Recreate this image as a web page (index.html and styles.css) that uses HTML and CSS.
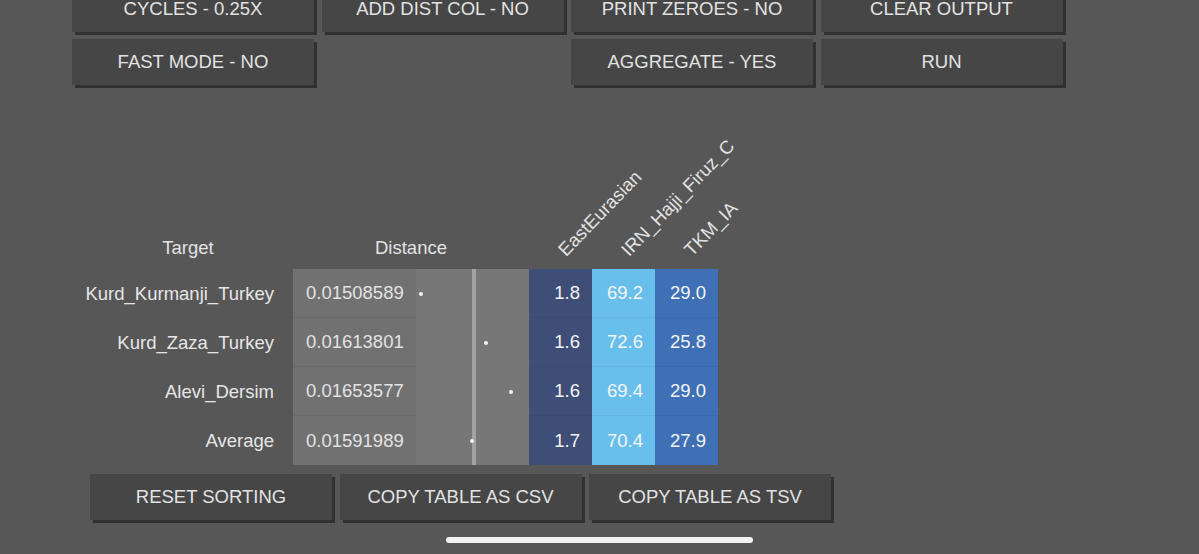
FILE: index.html
```html
<!DOCTYPE html>
<html>
<head>
<meta charset="utf-8">
<link rel="stylesheet" href="styles.css">
</head>
<body>
<div class="page">
  <div class="controls">
    <div class="btn">CYCLES - 0.25X</div>
    <div class="btn">ADD DIST COL - NO</div>
    <div class="btn">PRINT ZEROES - NO</div>
    <div class="btn">CLEAR OUTPUT</div>
    <div class="btn c1">FAST MODE - NO</div>
    <div class="btn c3">AGGREGATE - YES</div>
    <div class="btn c4">RUN</div>
  </div>

  <div class="table">
    <div class="th th-target">Target</div>
    <div class="th th-dist">Distance</div>
    <div class="th th-rot"><span class="rot">EastEurasian</span></div>
    <div class="th th-rot"><span class="rot">IRN_Hajji_Firuz_C</span></div>
    <div class="th th-rot"><span class="rot">TKM_IA</span></div>

    <div class="lbl">Kurd_Kurmanji_Turkey</div>
    <div class="num">0.01508589</div>
    <div class="chart"><span class="dot" style="left:3px"></span></div>
    <div class="v c-ee">1.8</div>
    <div class="v c-irn">69.2</div>
    <div class="v c-tkm">29.0</div>

    <div class="lbl">Kurd_Zaza_Turkey</div>
    <div class="num">0.01613801</div>
    <div class="chart"><span class="dot" style="left:68px"></span></div>
    <div class="v c-ee">1.6</div>
    <div class="v c-irn">72.6</div>
    <div class="v c-tkm">25.8</div>

    <div class="lbl">Alevi_Dersim</div>
    <div class="num">0.01653577</div>
    <div class="chart"><span class="dot" style="left:93px"></span></div>
    <div class="v c-ee">1.6</div>
    <div class="v c-irn">69.4</div>
    <div class="v c-tkm">29.0</div>

    <div class="lbl">Average</div>
    <div class="num last">0.01591989</div>
    <div class="chart last"><span class="dot" style="left:54px"></span></div>
    <div class="v c-ee last">1.7</div>
    <div class="v c-irn last">70.4</div>
    <div class="v c-tkm last">27.9</div>
  </div>

  <div class="actions">
    <div class="btn">RESET SORTING</div>
    <div class="btn">COPY TABLE AS CSV</div>
    <div class="btn">COPY TABLE AS TSV</div>
  </div>

  <div class="home-wrap"><div class="home"></div></div>
</div>
</body>
</html>
```

FILE: styles.css
```css
html, body {
  margin: 0;
  padding: 0;
  background: #575757;
  overflow: hidden;
}
body {
  width: 1199px;
  height: 554px;
  font-family: "Liberation Sans", Arial, Helvetica, sans-serif;
  color: #e4e4e4;
}
.page {
  width: 1199px;
}
.controls {
  margin-top: -14px;
  margin-left: 72px;
  display: grid;
  grid-template-columns: repeat(4, 242px);
  column-gap: 7.5px;
  row-gap: 7px;
}
.btn {
  height: 46px;
  background: #464646;
  box-shadow: 3px 3px 0 #313131;
  display: flex;
  align-items: center;
  justify-content: center;
  font-size: 18.5px;
  color: #e2e2e2;
  white-space: nowrap;
}
.c1 { grid-column: 1; }
.c3 { grid-column: 3; }
.c4 { grid-column: 4; }

.table {
  margin-top: 140px;
  margin-left: 90px;
  display: grid;
  grid-template-columns: 203px 123px 113px 63px 63px 63px;
  grid-template-rows: 44px repeat(4, 49px);
  font-size: 18.5px;
}
.th {
  display: flex;
  align-items: flex-end;
  padding-bottom: 11px;
  box-sizing: border-box;
  color: #e2e2e2;
  line-height: 21px;
}
.th-target {
  justify-content: center;
  padding-right: 7px;
}
.th-dist {
  grid-column: span 2;
  justify-content: center;
}
.th-rot {
  padding-left: 40px;
  padding-bottom: 9px;
}
.rot {
  display: inline-block;
  white-space: nowrap;
  transform-origin: 0 100%;
  transform: rotate(-46deg);
  line-height: 21px;
}
.lbl {
  display: flex;
  align-items: center;
  justify-content: flex-end;
  padding-right: 19px;
  color: #e6e6e6;
}
.num {
  background: #717171;
  display: flex;
  align-items: center;
  padding-left: 13px;
  color: #e2e2e2;
  border-bottom: 1px solid #6a6a6a;
}
.chart {
  position: relative;
  background: linear-gradient(to right, #777 0 56px, #a2a2a2 56px 60px, #777 60px);
}
.dot {
  position: absolute;
  top: 23px;
  width: 4px;
  height: 4px;
  border-radius: 50%;
  background: #f4f4f4;
}
.v {
  display: flex;
  align-items: center;
  justify-content: flex-end;
  padding-right: 12px;
  color: #f4f4f4;
  border-bottom: 1px solid rgba(0,0,0,0.05);
}
.last { border-bottom: none; }
.c-ee { background: #3e4e77; }
.c-irn { background: #69bfec; }
.c-tkm { background: #3f70b6; }

.actions {
  margin-top: 9px;
  margin-left: 90px;
  display: grid;
  grid-template-columns: repeat(3, 242px);
  column-gap: 7.5px;
}
.home-wrap {
  margin-top: 17px;
  display: flex;
  justify-content: center;
}
.home {
  width: 307px;
  height: 6px;
  border-radius: 3px;
  background: #f2f2f2;
}
```
